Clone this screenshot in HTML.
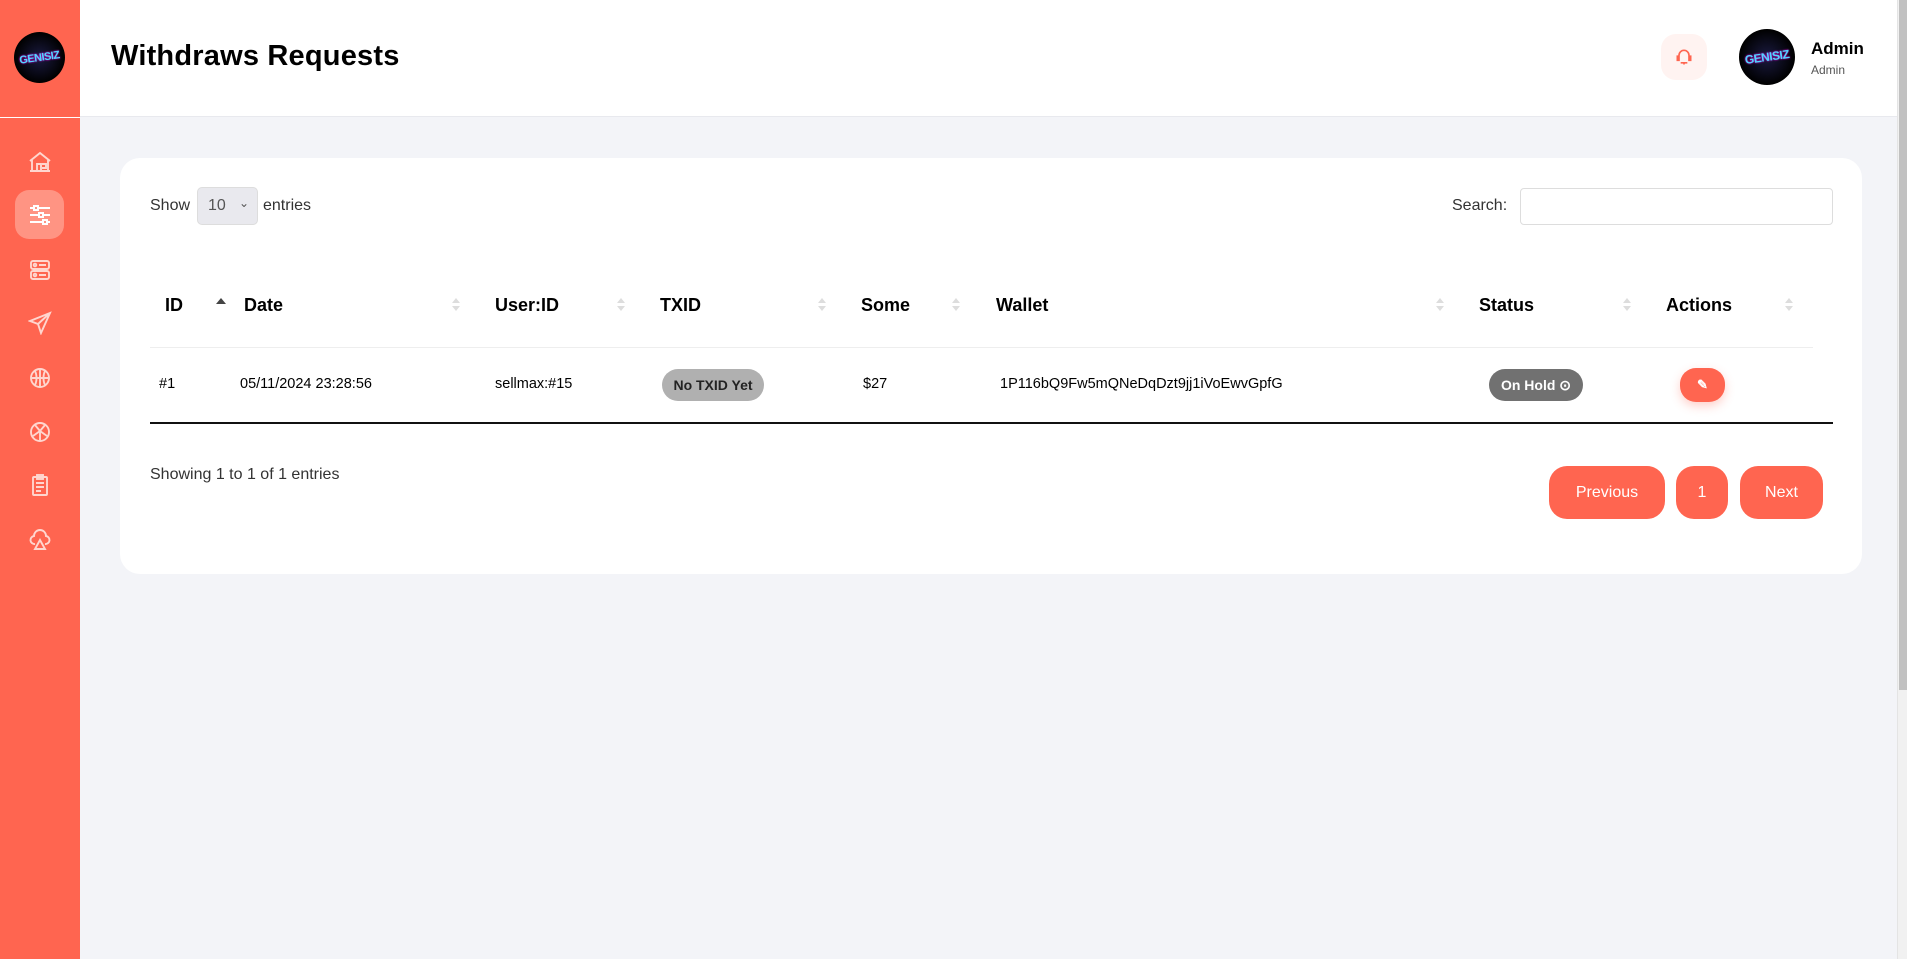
<!DOCTYPE html>
<html><head><meta charset="utf-8"><style>
*{margin:0;padding:0;box-sizing:border-box}
body{width:1907px;height:959px;overflow:hidden;background:#f3f4f8;font-family:"Liberation Sans",sans-serif;color:#000;position:relative}
.sb{position:absolute;left:0;top:0;width:80px;height:959px;background:#ff6550}
.sb .div{position:absolute;left:0;top:117px;width:80px;height:1px;background:#fff}
.logo{position:absolute;border-radius:50%;background:radial-gradient(circle,#1a1a40 0,#000 70%);overflow:hidden}
.logo span{position:absolute;left:0;right:0;top:50%;transform:translateY(-50%) rotate(-8deg);text-align:center;font-weight:bold;color:#4fd8ff;text-shadow:0 0 2px #f0f;letter-spacing:-.5px}
.ic{position:absolute;left:15px;width:49px;height:49px;display:flex;align-items:center;justify-content:center;border-radius:14px}
.ic.act{background:#ff9483}
.hdr{position:absolute;left:80px;top:0;right:10px;height:117px;background:#fff;border-bottom:1px solid #e8e9ee}
.title{position:absolute;left:111px;top:40px;font-size:29px;font-weight:bold;letter-spacing:.2px}
.bell{position:absolute;left:1661px;top:34px;width:46px;height:46px;border-radius:15px;background:#fff3f1;display:flex;align-items:center;justify-content:center}
.scroll{position:absolute;right:0;top:0;width:10px;height:959px;background:#f1f1f1;border-left:1px solid #e4e4e4}
.scroll div{position:absolute;left:1px;top:0;width:8px;height:690px;background:#c1c1c1}
.card{position:absolute;left:120px;top:158px;width:1742px;height:416px;background:#fff;border-radius:20px}
.t{position:absolute;white-space:nowrap}
.th{font-size:18px;font-weight:bold;top:295px}
.td{font-size:14.5px;top:376px}
.sort{position:absolute;width:8px;top:298px}
.sort:before{content:"";position:absolute;left:0;top:0;border:4px solid transparent;border-bottom:5px solid #ddd;border-top:0}
.sort:after{content:"";position:absolute;left:0;top:8px;border:4px solid transparent;border-top:5px solid #ddd;border-bottom:0}
.pill{position:absolute;border-radius:16px;font-size:14px;font-weight:bold;display:flex;align-items:center;justify-content:center}
.btn{position:absolute;top:466px;height:53px;background:#ff6550;color:#fff;border-radius:18px;display:flex;align-items:center;justify-content:center;font-size:16px}
</style></head><body>
<div class="sb">
 <div class="logo" style="left:14px;top:32px;width:51px;height:51px"><span style="font-size:11px">GENISIZ</span></div>
 <div class="div"></div>
 <div class="ic" style="top:137px"><svg width="24" height="24" viewBox="0 0 24 24" fill="none" stroke="#ffd6cf" stroke-width="1.9"><path d="M2 11 12 3l10 8M4 10v11h16V10M9 21v-7h4v7M14 14h4v4h-4M2 21h20"/></svg></div>
 <div class="ic act" style="top:190px"><svg width="24" height="24" viewBox="0 0 24 24" fill="none" stroke="#fff" stroke-width="2"><path d="M2 5h20M2 12h20M2 19h20"/><rect x="6" y="3" width="4" height="4" fill="#ff9483"/><rect x="11" y="10" width="4" height="4" fill="#ff9483"/><rect x="15" y="17" width="4" height="4" fill="#ff9483"/></svg></div>
 <div class="ic" style="top:245px"><svg width="24" height="24" viewBox="0 0 24 24" fill="none" stroke="#ffd6cf" stroke-width="1.9"><rect x="3" y="3" width="18" height="8" rx="2"/><rect x="3" y="13" width="18" height="8" rx="2"/><circle cx="7" cy="7" r="1.3"/><circle cx="7" cy="17" r="1.3"/><path d="M11 7h7M11 17h7"/></svg></div>
 <div class="ic" style="top:298px"><svg width="24" height="24" viewBox="0 0 24 24" fill="none" stroke="#ffd6cf" stroke-width="1.9"><path d="M22 2 2 10l8 3 3 9zM10 13l12-11"/></svg></div>
 <div class="ic" style="top:353px"><svg width="24" height="24" viewBox="0 0 24 24" fill="none" stroke="#ffd6cf" stroke-width="1.9"><circle cx="12" cy="12" r="9"/><path d="M3 12h18M12 3v18M7 5c2 4 2 10 0 14M17 5c-2 4-2 10 0 14"/></svg></div>
 <div class="ic" style="top:407px"><svg width="24" height="24" viewBox="0 0 24 24" fill="none" stroke="#ffd6cf" stroke-width="1.9"><circle cx="12" cy="12" r="9"/><path d="M7 5l5 6 5-6M5 16l7-5 7 5M12 11v10"/></svg></div>
 <div class="ic" style="top:460px"><svg width="24" height="24" viewBox="0 0 24 24" fill="none" stroke="#ffd6cf" stroke-width="1.9"><rect x="5" y="4" width="14" height="18" rx="1"/><rect x="9" y="2" width="6" height="4"/><path d="M8 10h8M8 14h8M8 18h5"/></svg></div>
 <div class="ic" style="top:515px"><svg width="24" height="24" viewBox="0 0 24 24" fill="none" stroke="#ffd6cf" stroke-width="1.9"><path d="M7 16a4 4 0 0 1-1-8 6 6 0 0 1 12 0 4 4 0 0 1-1 8M12 12l-5 9h10z"/></svg></div>
</div>
<div class="hdr"></div>
<div class="title">Withdraws Requests</div>
<div class="bell"><svg width="20" height="20" viewBox="0 0 24 24" fill="none" stroke="#ff6550" stroke-width="2"><path d="M6 14V10a6 6 0 0 1 12 0v4M4 11h2v5H4zM18 11h2v5h-2zM8 19h8M12 19v2"/></svg></div>
<div class="logo" style="left:1739px;top:29px;width:56px;height:56px"><span style="font-size:12px">GENISIZ</span></div>
<div class="t" style="left:1811px;top:39px;font-size:17px;font-weight:bold">Admin</div>
<div class="t" style="left:1811px;top:63px;font-size:12px;color:#555">Admin</div>
<div class="scroll"><div></div></div>
<div class="card"></div>
<div class="t" style="left:150px;top:197px;font-size:16px;color:#333">Show</div>
<div style="position:absolute;left:197px;top:187px;width:61px;height:38px;background:#e9e9ee;border:1px solid #ddd;border-radius:5px;font-size:16px;color:#555;padding:9px 10px">10<span style="position:absolute;right:8px;top:8px;font-size:12px">⌄</span></div>
<div class="t" style="left:263px;top:197px;font-size:16px;color:#333">entries</div>
<div class="t" style="left:1452px;top:197px;font-size:16px;color:#333">Search:</div>
<div style="position:absolute;left:1520px;top:188px;width:313px;height:37px;border:1px solid #ddd;border-radius:4px"></div>
<div class="t th" style="left:165px">ID</div>
<div style="position:absolute;left:216px;top:298px;border:5px solid transparent;border-bottom:6px solid #444;border-top:0"></div>
<div class="t th" style="left:244px">Date</div><div class="sort" style="left:452px"></div>
<div class="t th" style="left:495px">User:ID</div><div class="sort" style="left:617px"></div>
<div class="t th" style="left:660px">TXID</div><div class="sort" style="left:818px"></div>
<div class="t th" style="left:861px">Some</div><div class="sort" style="left:952px"></div>
<div class="t th" style="left:996px">Wallet</div><div class="sort" style="left:1436px"></div>
<div class="t th" style="left:1479px">Status</div><div class="sort" style="left:1623px"></div>
<div class="t th" style="left:1666px">Actions</div><div class="sort" style="left:1785px"></div>
<div style="position:absolute;left:150px;top:347px;width:1663px;height:1px;background:#eee"></div>
<div class="t td" style="left:159px">#1</div>
<div class="t td" style="left:240px">05/11/2024 23:28:56</div>
<div class="t td" style="left:495px">sellmax:#15</div>
<div class="pill" style="left:662px;top:369px;width:102px;height:32px;background:#b0b0b0;color:#222">No TXID Yet</div>
<div class="t td" style="left:863px">$27</div>
<div class="t td" style="left:1000px">1P116bQ9Fw5mQNeDqDzt9jj1iVoEwvGpfG</div>
<div class="pill" style="left:1489px;top:369px;width:94px;height:32px;background:#717171;color:#fff">On Hold ⊙</div>
<div class="pill" style="left:1680px;top:368px;width:45px;height:34px;background:#ff6550;color:#fff;box-shadow:0 4px 10px rgba(255,101,80,.3);font-size:13px">✎</div>
<div style="position:absolute;left:150px;top:422px;width:1683px;height:2px;background:#111"></div>
<div class="t" style="left:150px;top:466px;font-size:16px;color:#333">Showing 1 to 1 of 1 entries</div>
<div class="btn" style="left:1549px;width:116px">Previous</div>
<div class="btn" style="left:1676px;width:52px">1</div>
<div class="btn" style="left:1740px;width:83px">Next</div>
</body></html>
